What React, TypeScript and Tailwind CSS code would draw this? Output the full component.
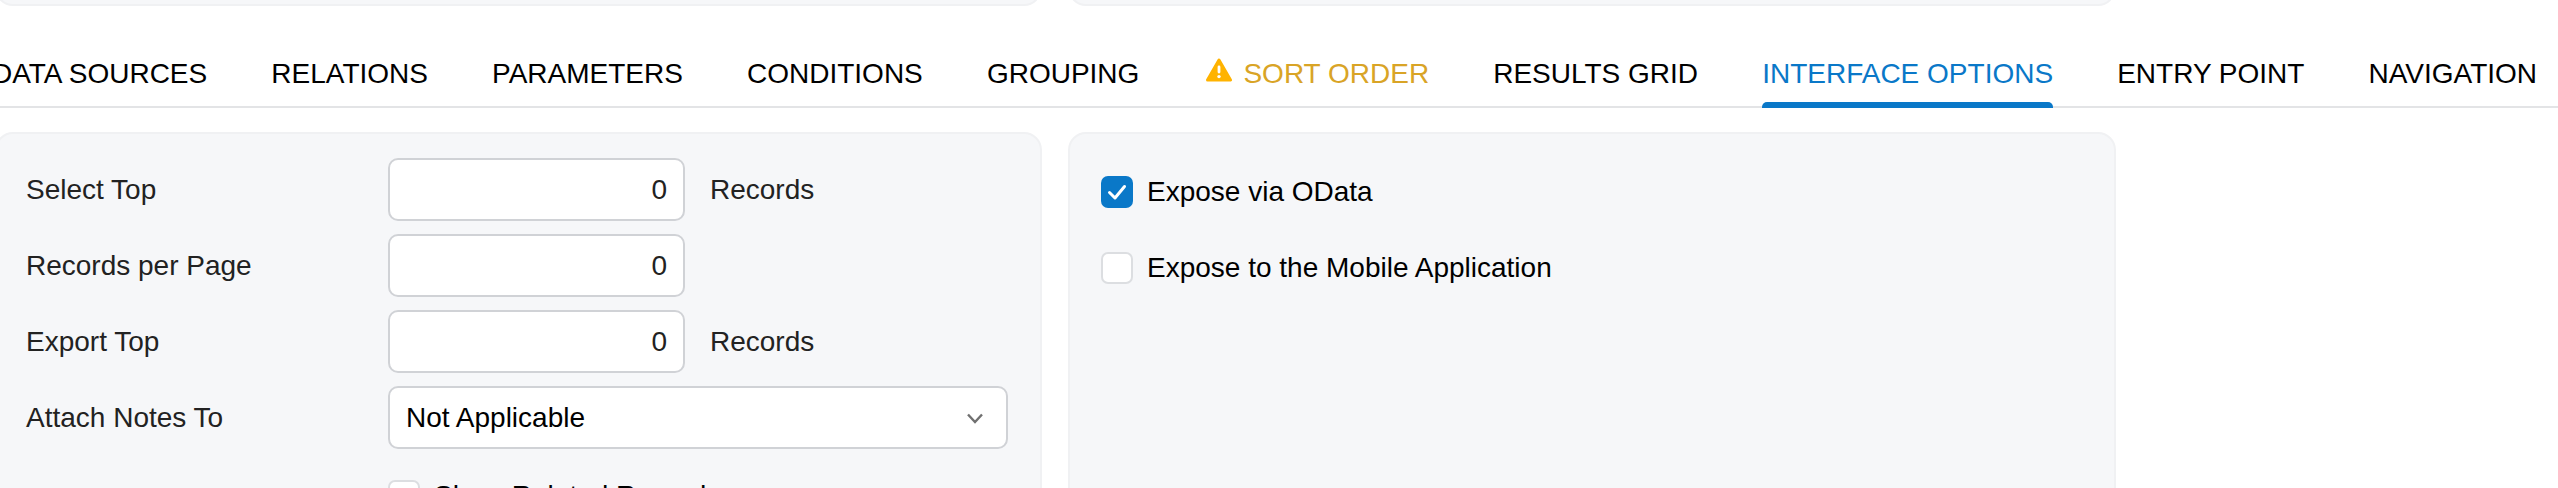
import React from 'react';

const tabs = ['DATA SOURCES', 'RELATIONS', 'PARAMETERS', 'CONDITIONS', 'GROUPING', 'SORT ORDER', 'RESULTS GRID', 'INTERFACE OPTIONS', 'ENTRY POINT', 'NAVIGATION'];

const WarningIcon = () => (
  <svg width="26" height="24" viewBox="0 0 26 24" className="shrink-0 ml-[3px]">
    <path d="M13 2 L24.5 22 H1.5 Z" fill="#ffb300" stroke="#ffb300" strokeWidth="3" strokeLinejoin="round" />
    <rect x="11.6" y="7.5" width="2.8" height="8" rx="1.4" fill="#fff" />
    <circle cx="13" cy="18.6" r="1.7" fill="#fff" />
  </svg>
);

const NumberBox = () => (
  <input
    readOnly
    value="0"
    className="w-[297px] h-[63px] shrink-0 rounded-[10px] border-2 border-[#d0d2d6] bg-white px-[16px] text-right text-[28px] text-[#222] outline-none"
  />
);

const Row = ({ label, children }: { label: string; children: React.ReactNode }) => (
  <div className="flex items-center h-[63px]">
    <div className="w-[362px] shrink-0 text-[#222]">{label}</div>
    {children}
  </div>
);

const Checkbox = ({ checked }: { checked?: boolean }) =>
  checked ? (
    <span className="flex items-center justify-center w-[32px] h-[32px] shrink-0 rounded-[7px] bg-[#0a78c8]">
      <svg width="24" height="24" viewBox="0 0 24 24" fill="none">
        <path d="M4.5 12.5 L10 18 L19.5 6.5" stroke="#fff" strokeWidth="3" strokeLinecap="round" strokeLinejoin="round" />
      </svg>
    </span>
  ) : (
    <span className="block w-[32px] h-[32px] shrink-0 rounded-[7px] border-2 border-[#dcdee1] bg-white" />
  );

export default function App() {
  return (
    <div className="h-[488px] w-full overflow-hidden bg-white text-[28px] leading-[32px] text-black" style={{ fontFamily: '"Liberation Sans", Arial, sans-serif' }}>
      {/* Bottom edges of the cards above */}
      <div className="flex items-end gap-[26px] ml-[-5px] h-[6px] overflow-hidden">
        <div className="w-[1047px] h-[40px] shrink-0 rounded-[18px] border-2 border-[#f0f1f3] bg-[#f6f7f9]" />
        <div className="w-[1048px] h-[40px] shrink-0 rounded-[18px] border-2 border-[#f0f1f3] bg-[#f6f7f9]" />
      </div>

      {/* Tabs */}
      <div className="mt-[50px] h-[50px] border-b-2 border-[#e3e4e6] box-content">
        <div className="flex gap-[64.1px] ml-[-8px] whitespace-nowrap h-[50px]">
          {tabs.map((tab) => {
            const active = tab === 'INTERFACE OPTIONS';
            const warn = tab === 'SORT ORDER';
            return (
              <div
                key={tab}
                className={`flex items-start pt-[2px] gap-[11px] h-[50px] ${
                  active ? 'relative text-[#0a78c8]' : warn ? 'text-[#d9a426]' : 'text-black'
                }`}
              >
                {warn && <WarningIcon />}
                {tab}
                {active && <span className="absolute left-0 right-0 bottom-[-2px] h-[6px] rounded-t-[5px] bg-[#0a78c8]" />}
              </div>
            );
          })}
        </div>
      </div>

      {/* Panels */}
      <div className="flex gap-[26px] ml-[-5px] mt-[24px]">
        <div className="w-[1047px] h-[400px] shrink-0 rounded-[18px] border-2 border-[#f0f1f3] bg-[#f6f7f9] pl-[29px] pt-[24px] flex flex-col gap-[13px]">
          <Row label="Select Top">
            <NumberBox />
            <span className="ml-[25px] text-[#222]">Records</span>
          </Row>
          <Row label="Records per Page">
            <NumberBox />
          </Row>
          <Row label="Export Top">
            <NumberBox />
            <span className="ml-[25px] text-[#222]">Records</span>
          </Row>
          <Row label="Attach Notes To">
            <div className="flex items-center justify-between w-[620px] h-[63px] rounded-[10px] border-2 border-[#d0d2d6] bg-white pl-[16px] pr-[22px]">
              <span>Not Applicable</span>
              <svg width="18" height="12" viewBox="0 0 18 12" fill="none">
                <path d="M2 2.5 L9 10 L16 2.5" stroke="#707070" strokeWidth="2.4" />
              </svg>
            </div>
          </Row>
          <div className="flex items-start gap-[14px] ml-[362px] mt-[18px]">
            <Checkbox />
            <span>Show Related Records</span>
          </div>
        </div>

        <div className="w-[1048px] h-[400px] shrink-0 rounded-[18px] border-2 border-[#f0f1f3] bg-[#f6f7f9] pl-[31px] pt-[42px] flex flex-col gap-[44px]">
          <label className="flex items-center gap-[14px]">
            <Checkbox checked />
            <span>Expose via OData</span>
          </label>
          <label className="flex items-center gap-[14px]">
            <Checkbox />
            <span>Expose to the Mobile Application</span>
          </label>
        </div>
      </div>
    </div>
  );
}
